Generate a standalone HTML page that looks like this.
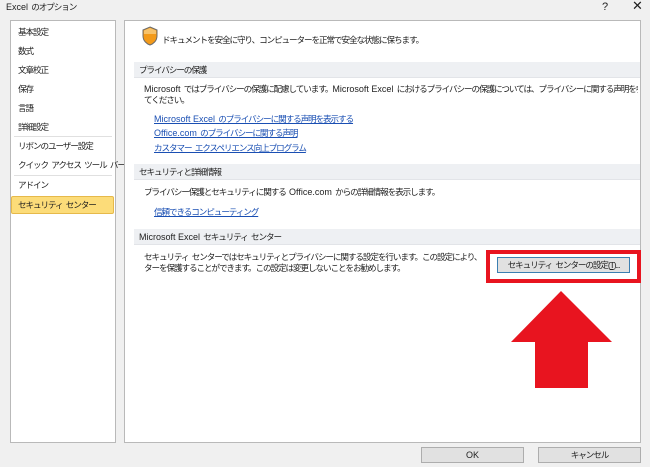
<!DOCTYPE html>
<html><head><meta charset="utf-8"><style>
*{margin:0;padding:0;box-sizing:border-box}
body{width:650px;height:467px;background:#f0f0f0;font-family:"Liberation Sans","Noto Sans CJK JP",sans-serif;font-size:8.6px;letter-spacing:-1.1px;word-spacing:2px;color:#1e1e1e;position:relative;overflow:hidden}
.l{letter-spacing:0;font-size:9px;word-spacing:0}
.a{position:absolute;white-space:nowrap;line-height:12px}
.lp{position:absolute;left:10px;top:20px;width:106px;height:423px;background:#fff;border:1px solid #b9b9b9}
.rp{position:absolute;left:124px;top:20px;width:517px;height:423px;background:#fff;border:1px solid #b9b9b9}
.hd{position:absolute;left:134px;width:506px;height:16px;background:#eef0f3;border-bottom:1px solid #e2e4e8}
.lk{color:#1a4fb3;text-decoration:underline}
.sep{position:absolute;left:14px;width:98px;height:1px;background:#e0e0e0}
.btn{position:absolute;background:#e1e1e1;border:1px solid #adadad;text-align:center;line-height:14px;white-space:nowrap;overflow:hidden}
.cl{overflow:hidden;max-width:494px}
</style></head><body>
<div class="a" style="left:6px;top:1px"><span class="l">Excel</span> のオプション</div>
<div class="a" style="left:602px;top:1px;font-size:11px">?</div>
<div class="a" style="left:632px;top:0px;font-size:13px">✕</div>
<div class="lp"></div>
<div class="a" style="left:18px;top:26px">基本設定</div>
<div class="a" style="left:18px;top:45px">数式</div>
<div class="a" style="left:18px;top:64px">文章校正</div>
<div class="a" style="left:18px;top:83px">保存</div>
<div class="a" style="left:18px;top:102px">言語</div>
<div class="a" style="left:18px;top:121px">詳細設定</div>
<div class="sep" style="top:136px"></div>
<div class="a" style="left:18px;top:140px">リボンのユーザー設定</div>
<div class="a" style="left:18px;top:159px">クイック アクセス ツール バー</div>
<div class="sep" style="top:175px"></div>
<div class="a" style="left:18px;top:179px">アドイン</div>
<div style="position:absolute;left:11px;top:196px;width:103px;height:18px;background:#fcdc79;border:1px solid #e6b94a;border-radius:2px"></div>
<div class="a" style="left:18px;top:199px">セキュリティ センター</div>
<div class="rp"></div>
<svg style="position:absolute;left:141px;top:26px" width="18" height="20" viewBox="0 0 18 20"><path d="M9 1 L16 4 V10 C16 15 12 18 9 19 C6 18 2 15 2 10 V4 Z" fill="#f39a1a" stroke="#6b6b6b" stroke-width="1"/><path d="M9 2 L15 4.5 V8 H3 V4.5Z" fill="#f7c26a"/></svg>
<div class="a" style="left:162px;top:34px">ドキュメントを安全に守り、コンピューターを正常で安全な状態に保ちます。</div>
<div class="hd" style="top:62px"></div>
<div class="a" style="left:139px;top:64px">プライバシーの保護</div>
<div class="a cl" style="left:144px;top:83px"><span class="l">Microsoft</span> ではプライバシーの保護に配慮しています。<span class="l">Microsoft Excel</span> におけるプライバシーの保護については、プライバシーに関する声明を参照し</div>
<div class="a" style="left:144px;top:94px">てください。</div>
<div class="a lk" style="left:154px;top:113px"><span class="l">Microsoft Excel</span> のプライバシーに関する声明を表示する</div>
<div class="a lk" style="left:154px;top:127px"><span class="l">Office.com</span> のプライバシーに関する声明</div>
<div class="a lk" style="left:154px;top:142px">カスタマー エクスペリエンス向上プログラム</div>
<div class="hd" style="top:164px"></div>
<div class="a" style="left:139px;top:166px">セキュリティと詳細情報</div>
<div class="a" style="left:144px;top:186px">プライバシー保護とセキュリティに関する <span class="l">Office.com</span> からの詳細情報を表示します。</div>
<div class="a lk" style="left:154px;top:206px">信頼できるコンピューティング</div>
<div class="hd" style="top:229px"></div>
<div class="a" style="left:139px;top:231px"><span class="l">Microsoft Excel</span> セキュリティ センター</div>
<div class="a cl" style="left:144px;top:251px;max-width:338px">セキュリティ センターではセキュリティとプライバシーに関する設定を行います。この設定により、コンピュー</div>
<div class="a cl" style="left:144px;top:262px;max-width:338px">ターを保護することができます。この設定は変更しないことをお勧めします。</div>
<div style="position:absolute;left:486px;top:250px;width:155px;height:33px;border:4px solid #e8141f"></div>
<div class="btn" style="left:497px;top:257px;width:133px;height:16px;border-color:#3c7fb1">セキュリティ センターの設定(<u>T</u>)...</div>
<svg style="position:absolute;left:0;top:0" width="650" height="467"><path d="M561 291 L612 342 L588 342 L588 388 L535 388 L535 342 L511 342 Z" fill="#e8141f"/></svg>
<div class="btn" style="left:421px;top:447px;width:103px;height:16px"><span class="l">OK</span></div>
<div class="btn" style="left:538px;top:447px;width:103px;height:16px">キャンセル</div>
</body></html>
